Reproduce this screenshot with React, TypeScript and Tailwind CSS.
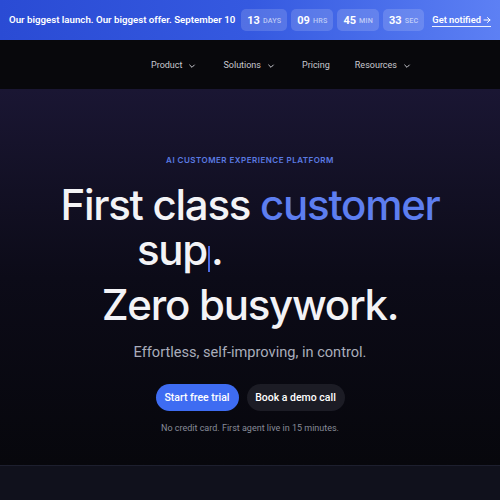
import React from "react";

function Chevron() {
  return (
    <svg width="8" height="8" viewBox="0 0 24 24" fill="none" stroke="currentColor" strokeWidth="3" strokeLinecap="round" strokeLinejoin="round">
      <path d="M5 9l7 7 7-7" />
    </svg>
  );
}

function Box({ n, l }: { n: string; l: string }) {
  return (
    <div className="flex gap-[3px] rounded-[5px] bg-white/15 px-[6px] h-[22px] items-center">
      <span className="text-[11px] font-bold text-white leading-none">{n}</span>
      <span className="text-[7.2px] font-medium text-white/60 leading-none tracking-wide pt-[2px]">{l}</span>
    </div>
  );
}

export default function App() {
  return (
    <div className="w-[500px] h-[500px] overflow-hidden bg-[#07070b]" style={{ fontFamily: "Roboto, 'Liberation Sans', sans-serif" }}>
      {/* banner */}
      <div className="h-[40px] flex items-center gap-[6px] px-[9px] bg-gradient-to-r from-[#2a4bd4] via-[#3559e0] to-[#5d80f4] whitespace-nowrap">
        <span className="text-[9.7px] font-semibold text-white">Our biggest launch. Our biggest offer. September 10</span>
        <div className="flex items-center gap-[4px]">
          <Box n="13" l="DAYS" />
          <Box n="09" l="HRS" />
          <Box n="45" l="MIN" />
          <Box n="33" l="SEC" />
        </div>
        <span className="ml-[2px] text-[9.3px] font-semibold text-white border-b border-white/90 flex items-center gap-[2px] leading-[12px]">
          Get notified
          <svg width="8" height="8" viewBox="0 0 16 16" fill="none" stroke="currentColor" strokeWidth="2" strokeLinecap="round" strokeLinejoin="round">
            <path d="M2 8h12M9 3l5 5-5 5" />
          </svg>
        </span>
      </div>
      {/* nav */}
      <div className="h-[49px] flex items-center pl-[151px] pt-[2px] text-[#c8c9d0] text-[9px] bg-[#08080c]">
        <div className="flex items-center gap-[6px]"><span>Product</span><Chevron /></div>
        <div className="flex items-center gap-[6px] ml-[27px]"><span>Solutions</span><Chevron /></div>
        <div className="ml-[27px]">Pricing</div>
        <div className="flex items-center gap-[6px] ml-[25px]"><span>Resources</span><Chevron /></div>
      </div>
      {/* hero */}
      <div className="h-[377px] flex flex-col items-center bg-gradient-to-b from-[#1a1633] via-[#0c0b18] to-[#07070c] border-b border-[#1d1f2e]">
        <div className="mt-[66px] text-[8px] leading-[10px] font-semibold tracking-[0.06em] text-[#5b7be3]" style={{ fontFamily: "Inter, sans-serif" }}>AI CUSTOMER EXPERIENCE PLATFORM</div>
        <div className="mt-[17px] w-full text-[42px] leading-[45px] font-medium tracking-[-0.03em] text-[#f3f3f6]" style={{ fontFamily: "Inter, sans-serif" }}>
          <div className="text-center">First class <span className="text-[#5d7ef0]">customer</span></div>
          <div className="pl-[137px]">sup<span className="inline-block w-[2px] h-[26px] bg-[#4b6be8] align-[-7px] mx-[1px]"></span>.</div>
          <div className="text-center mt-[10px]">Zero busywork.</div>
        </div>
        <div className="mt-[15px] text-[14.6px] leading-[20px] text-[#a9adbb]">Effortless, self-improving, in control.</div>
        <div className="mt-[22px] flex gap-[8px]">
          <button className="h-[27px] w-[83px] rounded-full bg-[#3e6cf2] text-white text-[10.5px] font-medium">Start free trial</button>
          <button className="h-[27px] w-[98px] rounded-full bg-[#1c1c25] text-white text-[10.5px] font-medium">Book a demo call</button>
        </div>
        <div className="mt-[10px] text-[9px] leading-[14px] text-[#878b98]">No credit card. First agent live in 15 minutes.</div>
      </div>
      <div className="h-[40px] bg-[#10111c]"></div>
    </div>
  );
}
